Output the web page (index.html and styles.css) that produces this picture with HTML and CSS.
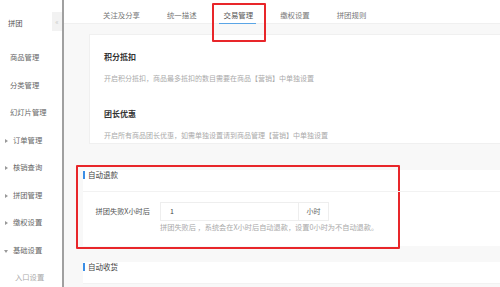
FILE: index.html
```html
<!DOCTYPE html>
<html>
<head>
    <meta charset="utf-8" />
    <title>交易管理</title>
    <link rel="stylesheet" href="styles.css">
</head>
<body>
    <div class="page">
        <div class="sidebar">
            <div class="side-top">
                <span class="side-title">拼团</span>
                <span class="collapse">&laquo;</span>
            </div>
            <div class="side-item">商品管理</div>
            <div class="side-item">分类管理</div>
            <div class="side-item">幻灯片管理</div>
            <div class="side-item arrow">订单管理</div>
            <div class="side-item arrow">核销查询</div>
            <div class="side-item arrow">拼团管理</div>
            <div class="side-item arrow">缴权设置</div>
            <div class="side-item arrow open">基础设置</div>
            <div class="side-item sub">入口设置</div>
        </div>

        <div class="main">
            <div class="tabs">
                <span class="tab">关注及分享</span>
                <span class="tab">统一描述</span>
                <span class="tab active">交易管理</span>
                <span class="tab">缴权设置</span>
                <span class="tab">拼团规则</span>
                <div class="mark mark-tab"></div>
            </div>

            <div class="card">
                <div class="option">
                    <div class="option-title">积分抵扣</div>
                    <div class="option-desc">开启积分抵扣，商品最多抵扣的数目需要在商品【营销】中单独设置</div>
                </div>
                <div class="option">
                    <div class="option-title">团长优惠</div>
                    <div class="option-desc">开启所有商品团长优惠，如需单独设置请到商品管理【营销】中单独设置</div>
                </div>
            </div>

            <div class="section">
                <div class="mark mark-section"></div>
                <div class="section-head">自动退款</div>
                <div class="form-row">
                    <label class="form-label">拼团失败X小时后</label>
                    <div class="form-field">
                        <div class="input-group">
                            <span class="input">1</span>
                            <span class="addon">小时</span>
                        </div>
                        <div class="help">拼团失败后 ，系统会在X小时后自动退款，设置0小时为不自动退款。</div>
                    </div>
                </div>
            </div>

            <div class="section">
                <div class="section-head">自动收货</div>
            </div>
        </div>
    </div>
</body>
</html>
```

FILE: styles.css
```css
html, body {
    margin: 0;
    padding: 0;
    font-family: "Noto Sans CJK SC", "Noto Sans", sans-serif;
    color: #666;
}

.page {
    display: flex;
    width: 500px;
    height: 287px;
    overflow: hidden;
}

.sidebar {
    width: 62px;
    flex-shrink: 0;
    background: #fff;
    border-right: 2px solid #a0a0a0;
    font-size: 7.3px;
}

.side-top {
    display: flex;
    justify-content: space-between;
    align-items: flex-start;
    height: 44px;
    padding-top: 12px;
    box-sizing: border-box;
}

.side-title {
    margin-left: 8px;
    margin-top: 6px;
    color: #555;
}

.collapse {
    width: 10px;
    height: 19px;
    line-height: 19px;
    text-align: center;
    background: #f2f2f2;
    color: #c8c8c8;
    font-size: 7px;
}

.side-item {
    height: 27.5px;
    line-height: 27.5px;
    padding-left: 10px;
    color: #666;
}

.side-item.arrow {
    position: relative;
    padding-left: 13px;
}

.side-item.arrow::before {
    content: "";
    position: absolute;
    left: 5px;
    top: 12px;
    border-left: 3px solid #999;
    border-top: 2px solid transparent;
    border-bottom: 2px solid transparent;
}

.side-item.open::before {
    left: 4px;
    top: 13px;
    border-top: 3px solid #999;
    border-left: 2px solid transparent;
    border-right: 2px solid transparent;
    border-bottom: 0;
}

.side-item.sub {
    padding-left: 15px;
    color: #aaa;
}

.main {
    position: relative;
    flex: 1;
    background: #f8f8f8;
}

.tabs {
    display: flex;
    height: 24px;
    padding-left: 39px;
    padding-top: 6px;
    box-sizing: border-box;
    background: #fff;
    border-bottom: 1px solid #f0f0f0;
    font-size: 7.4px;
    gap: 27px;
}

.tab {
    position: relative;
    height: 18px;
    line-height: 18px;
    color: #777;
}

.tab.active {
    color: #555;
}

.tab.active::after {
    content: "";
    position: absolute;
    left: -5px;
    right: -3px;
    bottom: 0;
    height: 1px;
    background: #5aa5e6;
}

.mark {
    position: absolute;
    border: 2px solid #e8262a;
    border-radius: 1px;
}

.mark-tab {
    left: 148px;
    top: 3px;
    width: 50px;
    height: 35px;
}

.card {
    margin: 10px 0 0 25px;
    padding: 16px 14px 0;
    background: #fff;
    border: 1px solid #f0f0f0;
    border-right: 0;
    height: 110px;
    box-sizing: border-box;
}

.option {
    margin-bottom: 25px;
}

.option-title {
    font-size: 8px;
    font-weight: bold;
    color: #333;
    line-height: 12px;
}

.option-desc {
    margin-top: 10px;
    font-size: 7px;
    color: #aaa;
    line-height: 10px;
}

.section {
    position: relative;
    margin-left: 19px;
    background: #fff;
}

.mark-section {
    left: -7px;
    top: -5px;
    width: 320px;
    height: 80px;
}

.section-head {
    position: relative;
    margin-top: 26px;
    padding: 0 0 11px 5px;
    border-bottom: 1px solid #f2f2f2;
    font-size: 7.5px;
    color: #444;
    line-height: 10px;
}

.section + .section .section-head {
    margin-top: 16px;
}

.section-head::before {
    content: "";
    position: absolute;
    left: 0;
    top: 1px;
    width: 2px;
    height: 8px;
    background: #3a8ee6;
}

.form-row {
    display: flex;
    padding-top: 10px;
    padding-bottom: 14px;
}

.form-label {
    width: 67px;
    text-align: right;
    padding-right: 10px;
    font-size: 7.2px;
    line-height: 19px;
    color: #555;
}

.input-group {
    display: flex;
    height: 19px;
    font-size: 7px;
    line-height: 17px;
}

.input {
    width: 128px;
    padding-left: 9px;
    border: 1px solid #eee;
    color: #444;
}

.addon {
    width: 29px;
    text-align: center;
    border: 1px solid #eee;
    border-left: 0;
    color: #666;
}

.help {
    margin-top: 1px;
    font-size: 7.2px;
    color: #aaa;
    line-height: 10px;
}
```
